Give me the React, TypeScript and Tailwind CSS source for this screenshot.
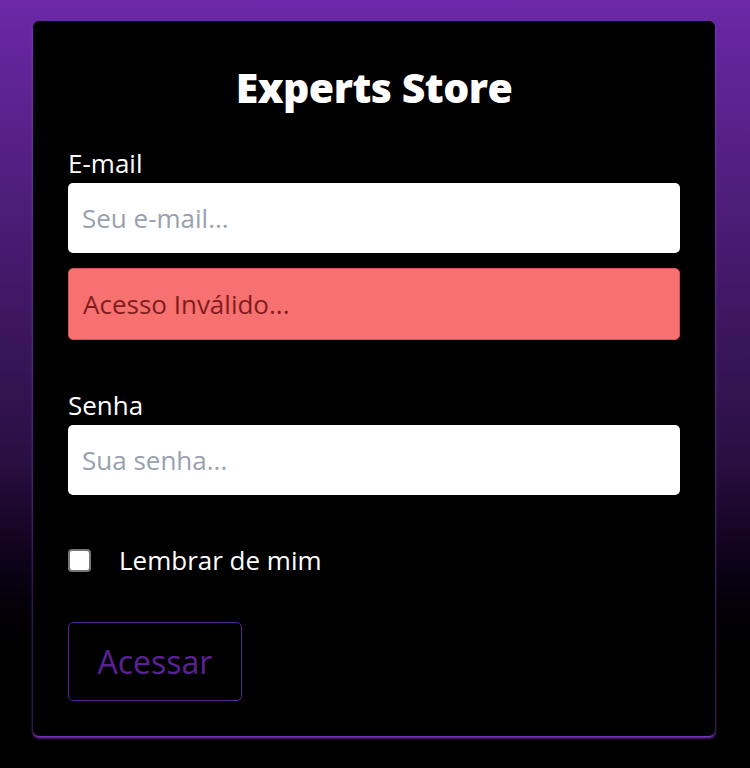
import { useState } from "react";

export default function App() {
  const [email, setEmail] = useState("");
  const [senha, setSenha] = useState("");
  const [lembrar, setLembrar] = useState(false);

  return (
    <div
      className="min-h-screen w-full bg-gradient-to-b from-[#6c28a8] via-[#2a0f42] via-60% to-black to-90% pt-[21px] pb-8"
      style={{ fontFamily: '"Open Sans", "Noto Sans", sans-serif' }}
    >
      <form
        className="ml-[33px] w-[682px] rounded-[6px] bg-black px-[35px] pt-[38px] pb-[35px] shadow-[0_2px_3px_#8a3fd4]"
        onSubmit={(e) => e.preventDefault()}
      >
        <h1 className="text-center text-[41px] font-extrabold leading-[56px] text-white tracking-[-0.5px]">
          Experts Store
        </h1>

        {/* E-mail */}
        <div className="mt-[34px] flex flex-col">
          <label className="pb-[6px] text-[26px] leading-[28px] text-white">E-mail</label>
          <input
            type="email"
            value={email}
            onChange={(e) => setEmail(e.target.value)}
            placeholder="Seu e-mail..."
            className="h-[70px] w-full rounded-[5px] bg-white px-[14px] text-[26px] text-gray-800 outline-none placeholder:text-gray-400"
          />
          <div className="mt-[15px] flex h-[72px] items-center rounded-[5px] border border-[#d9535a] bg-[#f87171] px-[14px] text-[26px] text-[#7f1d1d]">
            Acesso Inválido...
          </div>
        </div>

        {/* Senha */}
        <div className="mt-[51px] flex flex-col">
          <label className="pb-[6px] text-[26px] leading-[28px] text-white">Senha</label>
          <input
            type="password"
            value={senha}
            onChange={(e) => setSenha(e.target.value)}
            placeholder="Sua senha..."
            className="h-[70px] w-full rounded-[5px] bg-white px-[14px] text-[26px] text-gray-800 outline-none placeholder:text-gray-400"
          />
        </div>

        <label className="mt-[49px] flex h-[32px] items-center gap-[28px] text-[26px] leading-[32px] text-white">
          <input
            type="checkbox"
            checked={lembrar}
            onChange={(e) => setLembrar(e.target.checked)}
            className="h-[23px] w-[23px] appearance-none rounded-[4px] border-2 border-[#767676] bg-white checked:bg-[#6b21a8]"
          />
          Lembrar de mim
        </label>

        <button
          type="submit"
          className="mt-[46px] h-[79px] w-[174px] rounded-[5px] border border-[#5b2195] text-[32px] text-[#5b2195]"
        >
          Acessar
        </button>
      </form>
    </div>
  );
}
